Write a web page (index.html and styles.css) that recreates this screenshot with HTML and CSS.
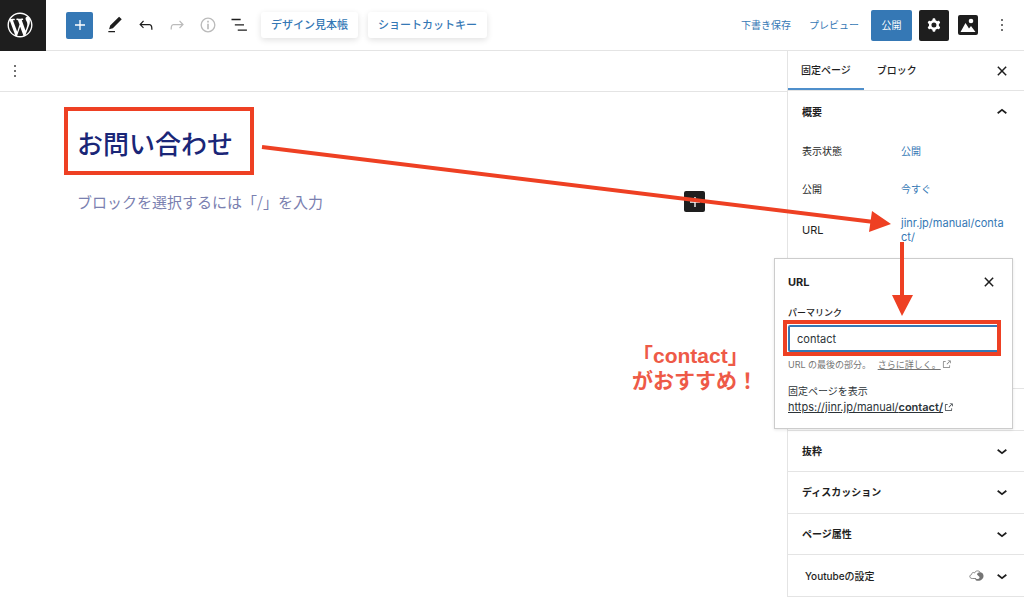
FILE: index.html
```html
<!DOCTYPE html>
<html lang="ja">
<head>
  <meta charset="utf-8">
  <meta name="viewport" content="width=device-width, initial-scale=1">
  <title>お問い合わせ</title>
  <link rel="stylesheet" href="styles.css">
</head>
<body>
  <!-- アイコン -->
  <svg class="defs" aria-hidden="true">
    <symbol id="down" viewBox="0 0 24 24"><path d="M6.800 10.500L12 14.700l5.200-4.200" fill="none" stroke="currentColor" stroke-width="2"/></symbol>
    <symbol id="close" viewBox="0 0 24 24"><path d="M7 7l10 10M17 7L7 17" fill="none" stroke="currentColor" stroke-width="1.800"/></symbol>
    <symbol id="more" viewBox="0 0 24 24"><path d="M13 19h-2v-2h2v2zm0-6h-2v-2h2v2zm0-6h-2V5h2v2z"/></symbol>
    <symbol id="external" viewBox="0 0 24 24"><path d="M18.2 17c0 .7-.6 1.2-1.2 1.2H7c-.7 0-1.2-.6-1.2-1.2V7c0-.7.6-1.2 1.2-1.2h3.2V4.2H7C5.5 4.2 4.2 5.5 4.2 7v10c0 1.5 1.2 2.8 2.8 2.8h10c1.5 0 2.8-1.2 2.8-2.8v-3.6h-1.5V17zM14.9 3v1.5h3.7l-6.4 6.4 1.1 1.1 6.4-6.4v3.7h1.5V3h-6.3z"/></symbol>
  </svg>

  <header class="header">
    <a class="logo" href="#" aria-label="WordPress">
      <svg viewBox="-2 -2 24 24"><path d="M20 10c0-5.51-4.49-10-10-10C4.48 0 0 4.49 0 10c0 5.52 4.48 10 10 10 5.51 0 10-4.48 10-10zM7.78 15.37L4.37 6.22c.55-.02 1.17-.08 1.17-.08.5-.06.44-1.13-.06-1.11 0 0-1.45.11-2.37.11-.18 0-.37 0-.58-.01C4.12 2.69 6.87 1.11 10 1.11c2.33 0 4.45.87 6.05 2.34-.68-.11-1.65.39-1.65 1.58 0 .74.45 1.36.9 2.1.35.61.55 1.36.55 2.46 0 1.49-1.4 5-1.4 5l-3.03-8.37c.54-.02.82-.17.82-.17.5-.05.44-1.25-.06-1.22 0 0-1.44.12-2.38.12-.87 0-2.33-.12-2.33-.12-.5-.03-.56 1.2-.06 1.22l.92.08 1.26 3.41zM17.41 10c.24-.64.74-1.87.43-4.25.7 1.29 1.05 2.71 1.05 4.25 0 3.29-1.73 6.24-4.4 7.78.97-2.59 1.94-5.2 2.92-7.78zM6.1 18.09C3.12 16.65 1.11 13.53 1.11 10c0-1.3.23-2.48.72-3.59C3.25 10.3 4.67 14.2 6.1 18.09zm4.03-6.63l2.58 6.98c-.86.29-1.76.45-2.71.45-.79 0-1.57-.11-2.29-.33.81-2.38 1.62-4.74 2.42-7.1z"/></svg>
    </a>
    <div class="tools">
      <button class="add" type="button" aria-label="ブロックを追加"><svg class="icon" viewBox="0 0 24 24"><path d="M11.200 6h1.600v5.200H18v1.600h-5.200V18h-1.600v-5.200H6v-1.600h5.200z"/></svg></button>
      <div class="tool-icons">
        <button type="button" aria-label="ツール"><svg class="icon" viewBox="0 0 24 24"><path d="M20.1 5.1L16.9 2 6.2 12.7l-1.3 4.4 4.5-1.3L20.1 5.1zM4 20.8h8v-1.5H4v1.5z"/></svg></button>
        <button type="button" aria-label="元に戻す"><svg class="icon" viewBox="0 0 24 24"><path d="M18.3 11.7c-.6-.6-1.4-.9-2.3-.9H6.7l2.9-3.3-1.1-1-4.5 5L8.5 16l1-1-2.7-2.7H16c.5 0 .9.2 1.3.5 1 1 1 3.4 1 4.5v.3h1.5v-.2c0-1.5 0-4.3-1.5-5.7z"/></svg></button>
        <button class="off" type="button" aria-label="やり直す" disabled><svg class="icon" viewBox="0 0 24 24"><path d="M15.6 6.5l-1.1 1 2.9 3.3H8c-.9 0-1.7.3-2.3.9-1.4 1.5-1.4 4.2-1.4 5.6v.2h1.5v-.3c0-1.1 0-3.5 1-4.5.3-.3.7-.5 1.3-.5h9.2L14.5 15l1.1 1.1 4.6-4.6-4.6-5z"/></svg></button>
        <button class="off" type="button" aria-label="詳細" disabled><svg class="icon" viewBox="0 0 24 24"><circle cx="12" cy="12" r="8.200" fill="none" stroke="currentColor" stroke-width="1.600"/><path d="M11 7h2v2h-2zM11 10.500h2V17h-2z"/></svg></button>
        <button type="button" aria-label="リスト表示"><svg class="icon" viewBox="0 0 24 24"><path d="M3 4.500h11v1.700H3zM7 11h11v1.700H7zM10.500 17.300h11V19h-11z"/></svg></button>
      </div>
      <button class="card-btn" type="button">デザイン見本帳</button>
      <button class="card-btn" type="button">ショートカットキー</button>
    </div>
    <div class="actions">
      <button class="text-btn" type="button">下書き保存</button>
      <button class="text-btn" type="button">プレビュー</button>
      <button class="publish" type="button">公開</button>
      <button class="settings" type="button" aria-label="設定"><svg class="icon" viewBox="0 0 24 24"><path fill-rule="evenodd" d="M10.289 4.836A1 1 0 0111.275 4h1.306a1 1 0 01.987.836l.244 1.466c.787.26 1.503.679 2.108 1.218l1.393-.522a1 1 0 011.216.437l.653 1.130a1 1 0 01-.23 1.273l-1.148.944a6.025 6.025 0 010 2.435l1.149.946a1 1 0 01.23 1.272l-.653 1.130a1 1 0 01-1.216.437l-1.394-.522c-.605.54-1.320.958-2.108 1.218l-.244 1.466a1 1 0 01-.987.836h-1.306a1 1 0 01-.986-.836l-.244-1.466a5.995 5.995 0 01-2.108-1.218l-1.394.522a1 1 0 01-1.217-.436l-.653-1.131a1 1 0 01.23-1.272l1.149-.946a6.026 6.026 0 010-2.435l-1.148-.944a1 1 0 01-.23-1.272l.653-1.131a1 1 0 011.217-.437l1.393.522a5.994 5.994 0 012.108-1.218l.244-1.466zM14.929 12a3 3 0 11-6 0 3 3 0 016 0z"/></svg></button>
      <button class="image" type="button" aria-label="画像"><svg viewBox="0 0 20 20"><rect width="20" height="20" rx="2"/><path fill="#fff" d="M2.500 17l5-9 3.500 5.500 2-2.500 4.500 6z"/><circle cx="13" cy="6" r="2.300" fill="#fff"/></svg></button>
      <button class="options" type="button" aria-label="オプション"><svg class="icon" viewBox="0 0 24 24"><use href="#more"/></svg></button>
    </div>
  </header>

  <div class="body">
    <main class="editor">
      <div class="block-bar">
        <button type="button" aria-label="オプション"><svg class="icon" viewBox="0 0 24 24"><use href="#more"/></svg></button>
      </div>
      <div class="content">
        <h1 class="title">お問い合わせ</h1>
        <div class="paragraph">
          <p>ブロックを選択するには「/」を入力</p>
          <button class="inserter" type="button" aria-label="ブロックを追加"><svg class="icon" viewBox="0 0 24 24"><path d="M11.200 6h1.600v5.200H18v1.600h-5.200V18h-1.600v-5.200H6v-1.600h5.200z"/></svg></button>
        </div>
      </div>
    </main>

    <aside class="sidebar">
      <div class="tabs">
        <button class="tab on" type="button">固定ページ</button>
        <button class="tab" type="button">ブロック</button>
        <button class="close" type="button" aria-label="閉じる"><svg class="icon" viewBox="0 0 24 24"><use href="#close"/></svg></button>
      </div>
      <section class="summary">
        <button class="panel" type="button">概要<svg class="icon up" viewBox="0 0 24 24"><use href="#down"/></svg></button>
        <div class="row"><span>表示状態</span><a href="#">公開</a></div>
        <div class="row"><span>公開</span><a href="#">今すぐ</a></div>
        <div class="row url"><span>URL</span><a href="#">jinr.jp/manual/contact/</a></div>
        <div class="popover">
          <div class="popover-head">
            <h2>URL</h2>
            <button type="button" aria-label="閉じる"><svg class="icon" viewBox="0 0 24 24"><use href="#close"/></svg></button>
          </div>
          <label for="slug">パーマリンク</label>
          <input id="slug" type="text" value="contact">
          <p class="help">URL の最後の部分。 <a href="#">さらに詳しく。</a><svg viewBox="0 0 24 24"><use href="#external"/></svg></p>
          <p class="view">固定ページを表示<br><a href="#">https://jinr.jp/manual/<b>contact/</b></a><svg viewBox="0 0 24 24"><use href="#external"/></svg></p>
        </div>
      </section>
      <button class="panel" type="button" aria-label="アイキャッチ画像"></button>
      <button class="panel" type="button">抜粋<svg class="icon" viewBox="0 0 24 24"><use href="#down"/></svg></button>
      <button class="panel" type="button">ディスカッション<svg class="icon" viewBox="0 0 24 24"><use href="#down"/></svg></button>
      <button class="panel" type="button">ページ属性<svg class="icon" viewBox="0 0 24 24"><use href="#down"/></svg></button>
      <button class="panel plugin" type="button">Youtubeの設定
        <svg class="mark" viewBox="0 0 15 12"><path fill="none" stroke="#888" d="M7 8.500H3.200C.3 8.500 0 5 2.500 4.600 2.600 2.500 4.700 2 5.500 3 6.500.3 10.300.3 11.300 2.500"/><path fill="#757575" d="M8 4.500c.5-3 6-3 6.500 1 .3 4-3.500 6-7.500 5l-1-1.800 3 .2c2-.6 2-2.200.5-3z"/></svg>
        <svg class="icon" viewBox="0 0 24 24"><use href="#down"/></svg>
      </button>
    </aside>
  </div>

  <!-- 説明用の赤枠と矢印 -->
  <div class="frame frame-title"></div>
  <div class="frame frame-slug"></div>
  <svg class="arrows" viewBox="0 0 1024 597" aria-hidden="true">
    <path class="line" d="M262 147L874 222M902 242V298"/>
    <path d="M872 211L891 224L869 232zM892 295H913L902 316z"/>
  </svg>
  <p class="note">「contact」<br>がおすすめ！</p>
</body>
</html>
```
FILE: styles.css
```css
*{box-sizing:border-box}
body{
    position:relative;
    min-height:100vh;
    margin:0;
    display:flex;
    flex-direction:column;
    background:#fff;
    color:#1e1e1e;
    font-family:Inter, "Noto Sans CJK JP", sans-serif;
    font-size:10px;
    line-height:14px;
}
button{
    display:flex;
    align-items:center;
    justify-content:center;
    padding:0;
    border:0;
    background:none;
    color:inherit;
    font:inherit;
    white-space:nowrap;
}
a{color:#3578b5; text-decoration:none}
p{margin:0}
svg{display:block; flex:none; fill:currentColor}
.defs{position:absolute; width:0; height:0}
.icon{width:20px; height:20px}

/* header */
.header{
    display:flex;
    height:51px;
    border-bottom:1px solid #e4e4e4;
}
.logo{
    width:46px;
    height:51px;
    padding:10px 5px;
    background:#1e1e1e;
    color:#fff;
}
.logo svg{width:30px; height:30px}
.tools{
    flex:1;
    display:flex;
    align-items:center;
    padding-left:20px;
}
.add{
    width:27px;
    height:27px;
    border-radius:2px;
    background:#3578b5;
    color:#fff;
}
.tool-icons{display:flex; padding:0 7px 0 6px}
.tool-icons button{width:31px; height:30px}
.off{color:#bbb}
.card-btn{
    height:26px;
    margin-right:10px;
    padding:0 10px;
    border-radius:3px;
    box-shadow:0 2px 6px rgba(0,0,0,.12);
    color:#3578b5;
    font-size:11px;
    font-weight:500;
}
.actions{
    display:flex;
    align-items:center;
    padding-right:12px;
}
.text-btn{margin-right:18px; color:#3578b5}
.text-btn + .text-btn{margin-right:12px}
.publish{
    width:41px;
    height:31px;
    margin-right:7px;
    border-radius:2px;
    background:#3578b5;
    color:#fff;
}
.settings{
    width:30px;
    height:31px;
    margin-right:9px;
    border-radius:2px;
    background:#1e1e1e;
    color:#fff;
}
.image svg{width:20px; height:20px}
.options{margin-left:14px}

/* editor */
.body{flex:1; display:flex}
.editor{flex:1}
.block-bar{
    display:flex;
    height:41px;
    padding-left:5px;
    border-bottom:1px solid #e4e4e4;
}
.content{
    padding:33px 82px 0 77px;
    color:#1a2677;
    font-family:"Noto Sans CJK JP", sans-serif;
}
.title{
    margin:0 0 30px;
    font-size:26px;
    font-weight:500;
    line-height:36px;
}
.paragraph{
    display:flex;
    align-items:center;
    justify-content:space-between;
    color:#7a80b0;
    font-size:15px;
    line-height:20px;
}
.inserter{
    width:21px;
    height:21px;
    border-radius:2px;
    background:#1e1e1e;
    color:#fff;
}

/* sidebar */
.sidebar{
    display:flex;
    flex-direction:column;
    width:237px;
    border-left:1px solid #e4e4e4;
}
.sidebar > .panel{flex:1}
.tabs{
    display:flex;
    height:40px;
    border-bottom:1px solid #e4e4e4;
}
.tab{
    padding:0 13px;
    border-bottom:2px solid transparent;
    font-weight:500;
}
.tab.on{border-color:#4f8fcb}
.close{margin-left:auto; padding-right:12px}
.panel{
    width:100%;
    min-height:41px;
    padding:0 12px 0 14px;
    border-bottom:1px solid #e4e4e4;
    font-weight:700;
    justify-content:flex-start;
}
.panel .icon{margin-left:auto}
.panel .up{transform:rotate(180deg)}
.summary{
    position:relative;
    height:298px;
    border-bottom:1px solid #e4e4e4;
}
.summary > .panel{border-bottom:0}
.row{
    display:grid;
    grid-template-columns:99px 103px;
    align-items:center;
    height:38px;
    padding-left:14px;
}
.row.url{height:44px; font-size:11px}
.row.url a{overflow-wrap:anywhere}
.panel.plugin{padding-left:17px; font-weight:500}
.plugin .mark{width:15px; height:12px; margin-left:auto}
.plugin .icon{margin-left:8px}

/* popover */
.popover{
    position:absolute;
    top:167px;
    right:11px;
    width:239px;
    padding:13px;
    border:1px solid #ccc;
    background:#fff;
    box-shadow:0 1px 3px rgba(0,0,0,.1);
}
.popover-head{
    display:flex;
    align-items:center;
    justify-content:space-between;
    height:20px;
    margin-bottom:14px;
}
.popover h2{margin:0; font-size:11px; font-weight:700}
.popover label{display:block; font-size:9px; font-weight:500}
.popover input{
    width:100%;
    height:27px;
    margin:5px 0 6px;
    padding:0 7px;
    border:2px solid #3578b5;
    border-radius:2px;
    outline:0;
    color:#2c3338;
    font:11px Inter, sans-serif;
}
.popover p svg{display:inline-block; width:11px; height:11px; vertical-align:-2px}
.help{margin-bottom:11px; color:#757575; font-size:9px}
.help a{margin-left:4px; color:inherit; text-decoration:underline}
.view{color:#2c3338; line-height:16px}
.view a{color:inherit; font-size:11px; text-decoration:underline}
.view b{font-weight:600}

/* annotations */
.frame{
    position:absolute;
    border:4px solid #ee4023;
}
.frame-title{top:107px; left:64px; width:190px; height:68px}
.frame-slug{top:320px; right:23px; width:218px; height:36px}
.arrows{
    position:absolute;
    top:0;
    right:0;
    width:1024px;
    height:597px;
    fill:#ee4023;
    pointer-events:none;
}
.arrows .line{stroke:#ee4023; stroke-width:4; fill:none}
.note{
    position:absolute;
    top:343px;
    right:266px;
    color:#ee5a47;
    font-family:"Liberation Sans", "Noto Sans CJK JP", sans-serif;
    font-size:21px;
    font-weight:700;
    line-height:25px;
}
```
